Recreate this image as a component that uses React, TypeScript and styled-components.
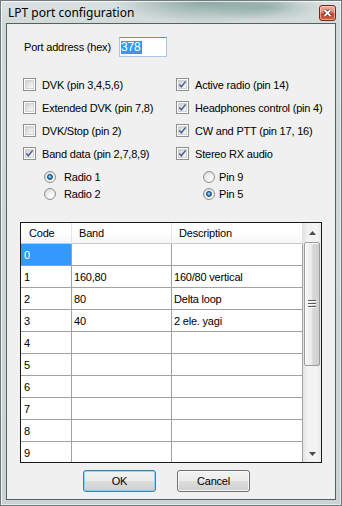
import React from 'react';
import styled, { createGlobalStyle, css } from 'styled-components';

const GlobalStyle = createGlobalStyle`
  html, body { margin: 0; padding: 0; background: #ffffff; }
  body {
    font-family: "Liberation Sans", Arial, sans-serif;
    font-size: 11px;
    color: #000;
  }
  * { box-sizing: border-box; }
`;

const Window = styled.div`
  width: 342px;
  height: 506px;
  border: 1px solid #6d7b7b;
  padding: 0 5px 5px 5px;
  display: flex;
  flex-direction: column;
  background:
    radial-gradient(ellipse 95px 22px at 60% 0%, rgba(92, 132, 126, 0.65), rgba(92, 132, 126, 0) 100%),
    radial-gradient(ellipse 60px 14px at 78% 6px, rgba(110, 150, 142, 0.5), rgba(110, 150, 142, 0) 100%),
    linear-gradient(to bottom, #dce2e2, #d1d9d9 24px, #cbd3d3);
  box-shadow: inset 1px 1px 0 rgba(255, 255, 255, 0.75), inset -1px -1px 0 rgba(255, 255, 255, 0.5);
`;

const TitleBar = styled.div`
  height: 22px;
  display: flex;
  align-items: flex-start;
  flex: none;
`;

const Title = styled.div`
  flex: 1;
  padding: 4px 0 0 2px;
  font-family: "Noto Sans", "Open Sans", sans-serif;
  font-size: 12px;
  line-height: 16px;
  color: #000;
`;

const CloseButton = styled.div`
  margin-top: 4px;
  width: 17px;
  height: 16px;
  border: 1px solid #6e2a1e;
  border-radius: 3px;
  display: flex;
  align-items: center;
  justify-content: center;
  background: linear-gradient(to bottom, #eab1a2 0%, #df8b75 45%, #c8442c 55%, #d4603f 100%);
  box-shadow: inset 0 0 0 1px rgba(255, 220, 210, 0.55);
`;

const Client = styled.div`
  flex: 1;
  border: 1px solid #556060;
  background: #f0f0f0;
  display: flex;
  flex-direction: column;
`;

const PortRow = styled.div`
  display: flex;
  align-items: center;
  height: 20px;
  margin-top: 13px;
  padding-left: 17px;
`;

const Label = styled.span`
  letter-spacing: -0.2px;
  white-space: nowrap;
`;

const PortLabel = styled(Label)`
  width: 95px;
`;

const TextBox = styled.div`
  width: 48px;
  height: 20px;
  border: 1px solid #a9c7e4;
  border-top-color: #5d93c4;
  background: #ffffff;
  display: flex;
  align-items: center;
  padding-left: 1px;
`;

const Selection = styled.span`
  background: #3399ff;
  color: #ffffff;
  height: 13px;
  line-height: 13px;
  font-size: 12px;
  letter-spacing: -0.2px;
  padding-right: 1px;
`;

const Caret = styled.span`
  width: 1px;
  height: 13px;
  background: #cc6a10;
`;

const Options = styled.div`
  display: grid;
  grid-template-columns: 153px 1fr;
  margin-top: 16px;
  padding-left: 16px;
`;

const Column = styled.div`
  display: flex;
  flex-direction: column;
`;

const CheckRow = styled.div`
  height: 23px;
  display: flex;
  align-items: center;
  gap: 6px;
`;

const Box = styled.span`
  position: relative;
  width: 13px;
  height: 13px;
  flex: none;
  border: 1px solid #8e8f8f;
  background: #ffffff;
  &::before {
    content: "";
    position: absolute;
    inset: 1px;
    border: 1px solid #d2d2d2;
    background: linear-gradient(135deg, #cdcdcd 0%, #e6e6e6 50%, #f8f8f8 100%);
  }
`;

const CheckMark = styled.svg`
  position: absolute;
  left: 0;
  top: 0;
  width: 11px;
  height: 11px;
`;

const RadioList = styled.div<{ $indent: number }>`
  margin-top: 3px;
  padding-left: ${(p) => p.$indent}px;
  display: flex;
  flex-direction: column;
`;

const RadioRow = styled.div<{ $gap: number }>`
  height: 17px;
  display: flex;
  align-items: center;
  gap: ${(p) => p.$gap}px;
`;

const RadioCircle = styled.span<{ $checked?: boolean }>`
  position: relative;
  width: 12px;
  height: 12px;
  flex: none;
  border-radius: 50%;
  border: 1px solid #8e8f8f;
  background: radial-gradient(circle at 65% 70%, #ffffff 0%, #eeeeee 45%, #d2d2d2 100%);
  ${(p) =>
    p.$checked &&
    css`
      &::after {
        content: "";
        position: absolute;
        inset: 2px;
        border-radius: 50%;
        border: 1px solid #1d3f66;
        background: radial-gradient(circle at 45% 40%, #b9ecff 0%, #3d9be0 45%, #1a5a98 100%);
      }
    `}
`;

const GridFrame = styled.div`
  margin: 20px 13px 0 13px;
  height: 241px;
  border: 1px solid #1a1a1a;
  display: flex;
  flex: none;
  background: #ffffff;
`;

const DataArea = styled.div`
  flex: 1;
  display: flex;
  flex-direction: column;
  overflow: hidden;
`;

const GridRow = styled.div<{ $header?: boolean }>`
  display: grid;
  grid-template-columns: 51px 100px 131px;
  height: ${(p) => (p.$header ? 21 : 22)}px;
  flex: none;
`;

const HeaderCell = styled.div`
  display: flex;
  align-items: center;
  padding-left: 7px;
  border-right: 1px solid #e2e4e8;
  border-bottom: 1px solid #c9c9c9;
  background: linear-gradient(to bottom, #ffffff 0%, #ffffff 50%, #f4f5f7 100%);
  letter-spacing: -0.2px;
  &:first-child {
    padding-left: 8px;
  }
`;

const Cell = styled.div<{ $selected?: boolean }>`
  display: flex;
  align-items: center;
  padding-left: 2px;
  border-right: 1px solid #a0a0a0;
  border-bottom: 1px solid #a0a0a0;
  background: ${(p) => (p.$selected ? '#3399ff' : '#ffffff')};
  color: ${(p) => (p.$selected ? '#ffffff' : '#000000')};
  letter-spacing: -0.2px;
  white-space: nowrap;
  overflow: hidden;
  &:first-child {
    padding-left: 3px;
  }
`;

const ScrollBar = styled.div`
  width: 18px;
  display: flex;
  flex-direction: column;
  background: linear-gradient(to right, #e3e3e3 0%, #f1f1f1 25%, #f3f3f3 75%, #e9e9e9 100%);
`;

const ArrowButton = styled.div<{ $h: number }>`
  height: ${(p) => p.$h}px;
  flex: none;
  display: flex;
  align-items: center;
  justify-content: center;
`;

const Thumb = styled.div`
  height: 124px;
  flex: none;
  margin: 0 1px;
  border: 1px solid #9b9b9b;
  border-radius: 2px;
  display: flex;
  align-items: center;
  justify-content: center;
  background: linear-gradient(to right, #f6f6f6 0%, #ebebeb 45%, #d9d9d9 55%, #cfcfcf 100%);
  box-shadow: inset 1px 1px 0 #ffffff;
`;

const Grip = styled.span`
  width: 8px;
  height: 8px;
  background: repeating-linear-gradient(to bottom, #5a5a5a 0 1px, #fafafa 1px 2px, transparent 2px 3px);
`;

const Track = styled.div`
  flex: 1;
`;

const ButtonRow = styled.div`
  display: flex;
  gap: 21px;
  margin-top: 7px;
  padding-left: 76px;
`;

const PushButton = styled.div<{ $default?: boolean }>`
  width: 73px;
  height: 22px;
  border: 1px solid ${(p) => (p.$default ? '#3c7fb1' : '#707070')};
  border-radius: 3px;
  display: flex;
  align-items: center;
  justify-content: center;
  letter-spacing: -0.2px;
  background: linear-gradient(to bottom, #f2f2f2 0%, #ebebeb 48%, #dddddd 52%, #cfcfcf 100%);
  box-shadow: inset 0 0 0 1px ${(p) => (p.$default ? 'rgba(110, 210, 250, 0.75)' : 'rgba(252, 252, 252, 0.85)')};
`;

const Arrow = ({ up }: { up?: boolean }) => (
  <svg width="7" height="4" viewBox="0 0 7 4">
    <polygon points={up ? '3.5,0 7,4 0,4' : '0,0 7,0 3.5,4'} fill="#4a4a4a" />
  </svg>
);

const Check = ({ checked, label }: { checked?: boolean; label: string }) => (
  <CheckRow>
    <Box>
      {checked && (
        <CheckMark viewBox="0 0 11 11">
          <path d="M2.3 5.4 L4.4 7.8 L8.6 2.4" fill="none" stroke="#4a5f9c" strokeWidth="1.5" />
        </CheckMark>
      )}
    </Box>
    <Label>{label}</Label>
  </CheckRow>
);

const Radio = ({ checked, label, gap }: { checked?: boolean; label: string; gap: number }) => (
  <RadioRow $gap={gap}>
    <RadioCircle $checked={checked} />
    <Label>{label}</Label>
  </RadioRow>
);

const rows: [string, string, string][] = [
  ['0', '', ''],
  ['1', '160,80', '160/80 vertical'],
  ['2', '80', 'Delta loop'],
  ['3', '40', '2 ele. yagi'],
  ['4', '', ''],
  ['5', '', ''],
  ['6', '', ''],
  ['7', '', ''],
  ['8', '', ''],
  ['9', '', ''],
];

export default function App() {
  return (
    <>
      <GlobalStyle />
      <Window>
        <TitleBar>
          <Title>LPT port configuration</Title>
          <CloseButton>
            <svg width="9" height="8" viewBox="0 0 9 8">
              <path d="M1.5 1 L7.5 7 M7.5 1 L1.5 7" stroke="#5a1c12" strokeWidth="3.2" />
              <path d="M1.5 1 L7.5 7 M7.5 1 L1.5 7" stroke="#ffffff" strokeWidth="1.8" />
            </svg>
          </CloseButton>
        </TitleBar>
        <Client>
          <PortRow>
            <PortLabel>Port address (hex)</PortLabel>
            <TextBox>
              <Selection>378</Selection>
              <Caret />
            </TextBox>
          </PortRow>
          <Options>
            <Column>
              <Check label="DVK (pin 3,4,5,6)" />
              <Check label="Extended DVK (pin 7,8)" />
              <Check label="DVK/Stop (pin 2)" />
              <Check checked label="Band data (pin 2,7,8,9)" />
              <RadioList $indent={21}>
                <Radio checked label="Radio 1" gap={8} />
                <Radio label="Radio 2" gap={8} />
              </RadioList>
            </Column>
            <Column>
              <Check checked label="Active radio (pin 14)" />
              <Check checked label="Headphones control (pin 4)" />
              <Check checked label="CW and PTT (pin 17, 16)" />
              <Check checked label="Stereo RX audio" />
              <RadioList $indent={27}>
                <Radio label="Pin 9" gap={4} />
                <Radio checked label="Pin 5" gap={4} />
              </RadioList>
            </Column>
          </Options>
          <GridFrame>
            <DataArea>
              <GridRow $header>
                <HeaderCell>Code</HeaderCell>
                <HeaderCell>Band</HeaderCell>
                <HeaderCell>Description</HeaderCell>
              </GridRow>
              {rows.map(([code, band, desc], i) => (
                <GridRow key={code}>
                  <Cell $selected={i === 0}>{code}</Cell>
                  <Cell>{band}</Cell>
                  <Cell>{desc}</Cell>
                </GridRow>
              ))}
            </DataArea>
            <ScrollBar>
              <ArrowButton $h={19}>
                <Arrow up />
              </ArrowButton>
              <Thumb>
                <Grip />
              </Thumb>
              <Track />
              <ArrowButton $h={17}>
                <Arrow />
              </ArrowButton>
            </ScrollBar>
          </GridFrame>
          <ButtonRow>
            <PushButton $default>OK</PushButton>
            <PushButton>Cancel</PushButton>
          </ButtonRow>
        </Client>
      </Window>
    </>
  );
}
